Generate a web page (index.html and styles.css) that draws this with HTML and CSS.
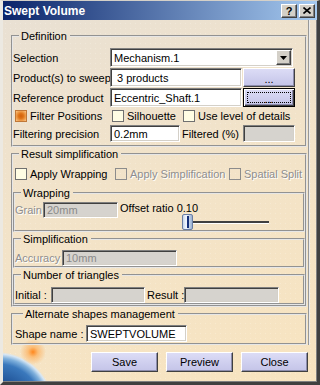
FILE: index.html
```html
<!DOCTYPE html>
<html lang="en">
<head>
    <meta charset="UTF-8">
    <meta name="viewport" content="width=device-width, initial-scale=1.0">
    <title>Swept Volume</title>
    <link rel="stylesheet" href="styles.css">
</head>
<body>
    <div class="window">
        <div class="titlebar">
            <span class="title">Swept Volume</span>
            <span class="tbtn help">?</span>
            <span class="tbtn close">
                <svg width="8" height="7" viewBox="0 0 8 7"><path d="M0.5 0.5 L7.5 6.5 M7.5 0.5 L0.5 6.5" stroke="#000" stroke-width="1.6"/></svg>
            </span>
        </div>

        <div class="panel">
            <fieldset class="group def">
                <legend>Definition</legend>
                <div class="rows">
                    <div class="row h19">
                        <span class="lbl">Selection</span>
                        <div class="combo">
                            <span class="val">Mechanism.1</span>
                            <span class="drop">
                                <svg width="7" height="4" viewBox="0 0 7 4"><path d="M0 0 H7 L3.5 4 Z" fill="#000"/></svg>
                            </span>
                        </div>
                    </div>
                    <div class="row h19">
                        <span class="lbl">Product(s) to sweep</span>
                        <span class="edit w132 tall">&nbsp;3 products</span>
                        <span class="btn dots">...</span>
                    </div>
                    <div class="row h19">
                        <span class="lbl">Reference product</span>
                        <span class="edit w132 tall">Eccentric_Shaft.1</span>
                        <span class="btn dots focus"><span class="focusrect">...</span></span>
                    </div>
                    <div class="row h16 checks">
                        <span class="chk c97"><span class="cb on"></span>Filter Positions</span>
                        <span class="chk c71"><span class="cb"></span>Silhouette</span>
                        <span class="chk"><span class="cb"></span>Use level of details</span>
                    </div>
                    <div class="row h17">
                        <span class="lbl">Filtering precision</span>
                        <span class="edit w70">0.2mm</span>
                        <span class="filtered">Filtered (%)</span>
                        <span class="edit gray w52"></span>
                    </div>
                </div>
            </fieldset>

            <fieldset class="group res">
                <legend>Result simplification</legend>
                <div class="row h16 checks apply">
                    <span class="chk c100"><span class="cb"></span>Apply Wrapping</span>
                    <span class="chk c114 disabled"><span class="cb off"></span>Apply Simplification</span>
                    <span class="chk disabled"><span class="cb off"></span>Spatial Split</span>
                </div>

                <fieldset class="group sub wrap">
                    <legend>Wrapping</legend>
                    <div class="row top">
                        <span class="disabled grain">Grain</span>
                        <span class="edit gray w75 h16">20mm</span>
                        <div class="offset">
                            <div class="offset-lbl">Offset ratio 0.10</div>
                            <div class="slider">
                                <span class="thumb"></span>
                                <span class="track"></span>
                            </div>
                        </div>
                    </div>
                </fieldset>

                <fieldset class="group sub simp">
                    <legend>Simplification</legend>
                    <div class="row h16">
                        <span class="disabled accuracy">Accuracy</span>
                        <span class="edit gray w115 h16">10mm</span>
                    </div>
                </fieldset>

                <fieldset class="group sub tri">
                    <legend>Number of triangles</legend>
                    <div class="row h16">
                        <span class="initial">Initial :</span>
                        <span class="edit gray w94 h16"></span>
                        <span class="result">Result :</span>
                        <span class="edit gray w95 h16"></span>
                    </div>
                </fieldset>
            </fieldset>

            <fieldset class="group alt">
                <legend>Alternate shapes management</legend>
                <div class="row h17">
                    <span class="shape">Shape name :</span>
                    <span class="edit w101">SWEPTVOLUME</span>
                </div>
            </fieldset>
        </div>

        <div class="actions">
            <span class="btn big">Save</span>
            <span class="btn big">Preview</span>
            <span class="btn big">Close</span>
        </div>
    </div>
</body>
</html>
```

FILE: styles.css
```css
body {
    margin: 0;
    font-family: "Liberation Sans", Arial, sans-serif;
    font-size: 11px;
    color: #000;
}

.window {
    width: 320px;
    height: 385px;
    box-sizing: border-box;
    border-style: solid;
    border-width: 1px 3px 3px 3px;
    border-color: #d4d0c8 #404040 #404040 #ece9e2;
    box-shadow: inset -1px -1px 0 #808080;
    background:
        radial-gradient(circle at 30px 351px, rgba(255, 130, 20, 0.95) 0, rgba(255, 165, 70, 0.6) 5px, rgba(255, 200, 140, 0) 13px),
        radial-gradient(circle at -5px 407px, #163a78 0, #1f5296 26px, #3a78bc 44px, #7fb0dc 50px, #d6e6f4 54px, rgba(240, 228, 200, 0) 56px),
        radial-gradient(rgba(255, 255, 255, 0.22) 0.7px, transparent 1px) 0 0 / 5px 5px,
        linear-gradient(160deg, #e8e0d4 0%, #f2e3c9 45%, #f8e4c0 100%);
}

/* title bar */
.titlebar {
    height: 19px;
    display: flex;
    align-items: center;
    padding-left: 1px;
    background: linear-gradient(90deg, #0a246a, #a6caf0);
}

.title {
    flex: 1;
    color: #fff;
    font-weight: bold;
    font-size: 12px;
}

.tbtn {
    width: 16px;
    height: 14px;
    box-sizing: border-box;
    margin-right: 2px;
    display: flex;
    align-items: center;
    justify-content: center;
    background: #d4d0c8;
    border: 1px solid;
    border-color: #fff #404040 #404040 #fff;
    box-shadow: inset -1px -1px 0 #808080;
    font-weight: bold;
    font-size: 11px;
    line-height: 12px;
}

/* panel and frames */
.panel {
    width: 307px;
    box-sizing: border-box;
    padding: 9px 1px 0 8px;
    border-right: 2px groove #ececec;
}

.group {
    margin: 0;
    padding: 0;
    min-width: 0;
    border: 2px groove #e6e6e6;
}

.group legend {
    margin-left: 6px;
    padding: 0 3px 0 2px;
    line-height: 14px;
}

.def {
    padding: 5px 0 3px;
}

.rows {
    display: flex;
    flex-direction: column;
    gap: 1px;
}

.row {
    display: flex;
    align-items: center;
    white-space: nowrap;
}

.row.top {
    align-items: flex-start;
}

.h19 { height: 19px; }
.h17 { height: 17px; }
.h16 { height: 16px; }

.lbl {
    width: 97px;
    flex: none;
}

/* inputs */
.edit,
.combo {
    flex: none;
    box-sizing: border-box;
    height: 17px;
    display: flex;
    align-items: center;
    padding-left: 3px;
    background: #fff;
    border: 1px solid;
    border-color: #808080 #fff #fff #808080;
    box-shadow: inset 1px 1px 0 #404040, inset -1px -1px 0 #d4d0c8;
}

.edit.tall { height: 19px; }
.edit.h16 { height: 16px; }

.edit.gray {
    background: #d6d3ce;
    color: #8a8a8a;
}

.combo {
    width: 183px;
    height: 19px;
    padding: 1px;
}

.combo .val {
    flex: 1;
    padding-left: 2px;
}

.drop {
    width: 15px;
    height: 15px;
    box-sizing: border-box;
    display: flex;
    align-items: center;
    justify-content: center;
    background: #d4d0c8;
    border: 1px solid;
    border-color: #fff #404040 #404040 #fff;
    box-shadow: inset -1px -1px 0 #808080;
}

.w132 { width: 132px; }
.w70 { width: 70px; }
.w52 { width: 52px; }
.w75 { width: 75px; }
.w115 { width: 115px; }
.w94 { width: 94px; }
.w95 { width: 95px; }
.w101 { width: 101px; }

/* buttons */
.btn {
    flex: none;
    box-sizing: border-box;
    display: flex;
    align-items: center;
    justify-content: center;
    background: linear-gradient(#dcdcf6, #c4c4e8);
    border: 1px solid;
    border-color: #fff #404040 #404040 #fff;
    box-shadow: inset -1px -1px 0 #8c8cac;
}

.btn.dots {
    width: 52px;
    height: 19px;
    margin-left: 1px;
    padding-top: 3px;
}

.btn.focus {
    border-color: #000;
    box-shadow: inset 1px 1px 0 #fff, inset -1px -1px 0 #404040, inset -2px -2px 0 #8c8cac;
    padding: 0;
}

.focusrect {
    flex: 1;
    align-self: stretch;
    margin: 3px;
    border: 1px dotted #000;
    display: flex;
    align-items: center;
    justify-content: center;
    padding-top: 2px;
}

.btn.big {
    width: 67px;
    height: 20px;
}

/* checkboxes */
.checks {
    padding-left: 2px;
}

.chk {
    display: flex;
    align-items: center;
    gap: 3px;
    flex: none;
}

.c97 { width: 97px; }
.c71 { width: 71px; }
.c100 { width: 100px; }
.c114 { width: 114px; }

.cb {
    width: 12px;
    height: 12px;
    box-sizing: border-box;
    border: 1px solid #707070;
    background: #fffde4;
}

.cb.on {
    border-color: #c07838;
    background: radial-gradient(circle, #d2600c 0, #de7418 35%, #f2a85a 75%, #f8c890 100%);
}

.cb.off {
    background: transparent;
    border-color: #8c8c8c;
}

.disabled {
    color: #8e8e8e;
    text-shadow: 1px 1px 0 #fff;
}

.filtered {
    width: 61px;
    margin-left: 2px;
}

/* result simplification */
.apply {
    margin-top: 5px;
}

.wrap {
    margin-top: 4px;
    padding-top: 2px;
}

.wrap .row {
    height: 28px;
}

.grain {
    width: 28px;
    line-height: 16px;
}

.offset {
    margin-left: 2px;
    width: 150px;
}

.offset-lbl {
    line-height: 12px;
}

.slider {
    margin-left: 62px;
    width: 87px;
    height: 16px;
    display: flex;
    align-items: center;
}

.track {
    flex: 1;
    height: 2px;
    background: #404040;
    border-bottom: 1px solid #fff;
    margin-top: 1px;
}

.thumb {
    position: relative;
    flex: none;
    width: 11px;
    height: 16px;
    box-sizing: border-box;
    border: 1px solid #6a7ea4;
    border-radius: 2px;
    background: linear-gradient(90deg, #c4d4ea, #f4f8ff 35%, #98b0d2);
}

.thumb::after {
    content: "";
    position: absolute;
    left: 4px;
    top: 1px;
    width: 2px;
    height: 12px;
    background: #15307a;
}

.simp {
    padding-top: 4px;
}

.accuracy {
    width: 47px;
}

.tri {
    padding-top: 5px;
}

.initial {
    width: 36px;
}

.result {
    width: 37px;
    margin-left: 2px;
}

.alt {
    padding: 4px 0 1px 2px;
}

.alt legend {
    margin-left: 8px;
}

.shape {
    width: 71px;
}

/* bottom buttons */
.actions {
    display: flex;
    justify-content: flex-end;
    gap: 8px;
    margin-top: 7px;
    padding-right: 9px;
}
```
